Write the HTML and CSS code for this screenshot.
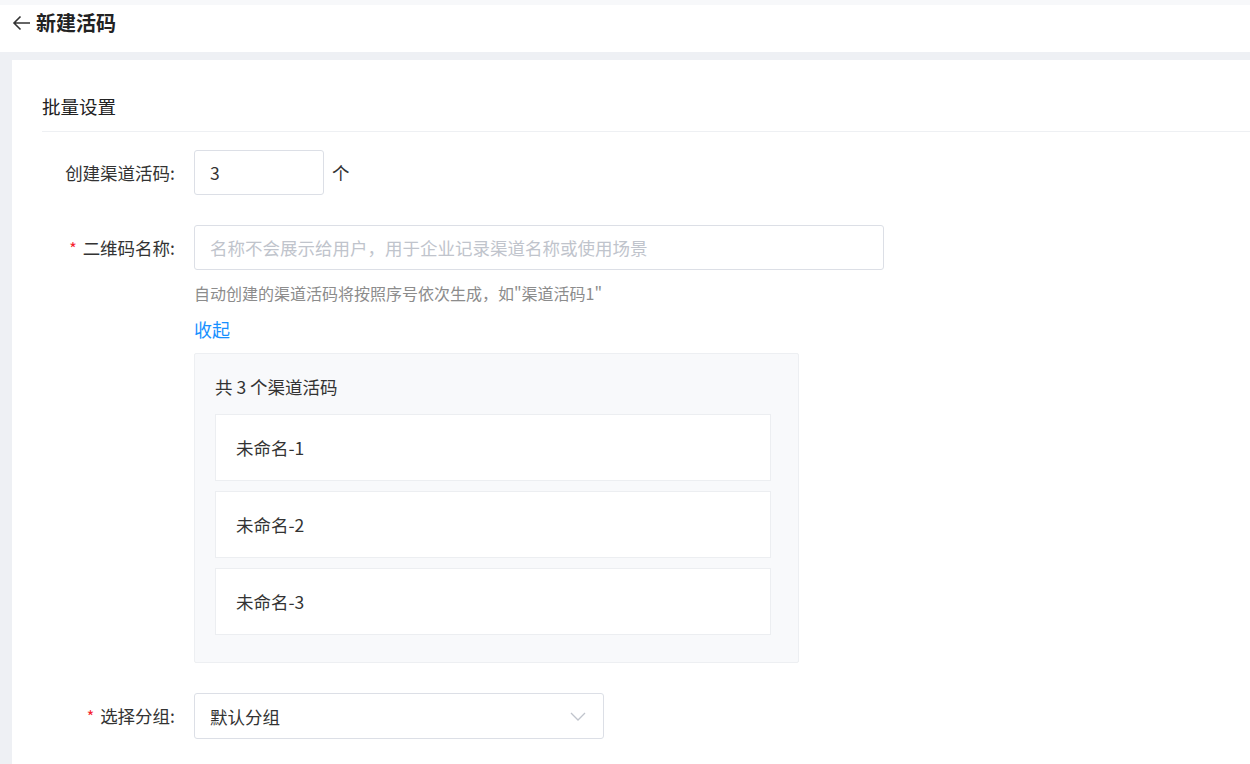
FILE: index.html
```html
<!DOCTYPE html>
<html lang="zh-CN">
<head>
    <meta charset="UTF-8">
    <meta name="viewport" content="width=device-width, initial-scale=1.0">
    <title>新建活码</title>
    <link rel="stylesheet" href="styles.css">
</head>
<body>
    <div class="header">
        <span class="back">
            <svg width="19" height="16" viewBox="0 0 19 16"><path d="M18 8H2M8.5 1.5L2 8l6.5 6.5" fill="none" stroke="#333" stroke-width="1.6"/></svg>
        </span>
        <h1>新建活码</h1>
    </div>

    <div class="main">
        <div class="panel">
            <div class="section-title">批量设置</div>

            <div class="form-row first">
                <label class="label">创建渠道活码:</label>
                <div class="field inline">
                    <input class="input count" type="text" value="3">
                    <span class="unit">个</span>
                </div>
            </div>

            <div class="form-row">
                <label class="label required">二维码名称:</label>
                <div class="field">
                    <input class="input name" type="text" placeholder="名称不会展示给用户，用于企业记录渠道名称或使用场景">
                    <div class="hint">自动创建的渠道活码将按照序号依次生成，如"渠道活码1"</div>
                    <a class="link" href="#">收起</a>
                    <div class="code-box">
                        <div class="code-title">共 3 个渠道活码</div>
                        <div class="code-item">未命名-1</div>
                        <div class="code-item">未命名-2</div>
                        <div class="code-item">未命名-3</div>
                    </div>
                </div>
            </div>

            <div class="form-row">
                <label class="label required">选择分组:</label>
                <div class="field">
                    <div class="select">
                        <span>默认分组</span>
                        <svg width="16" height="9" viewBox="0 0 16 9"><path d="M1 1l7 7 7-7" fill="none" stroke="#c0c4cc" stroke-width="1.3"/></svg>
                    </div>
                </div>
            </div>
        </div>
    </div>
</body>
</html>
```

FILE: styles.css
```css
body {
    margin: 0;
    background: #eef0f4;
    font-family: "Noto Sans CJK SC", "Noto Sans", sans-serif;
    color: #333;
}

.header {
    display: flex;
    align-items: flex-start;
    height: 43px;
    background: #fff;
    border-top: 5px solid #f7f8fa;
    padding: 4px 0 0 12px;
    box-sizing: content-box;
}

.back {
    display: flex;
    width: 19px;
    margin: 6px 5px 0 0;
}

.header h1 {
    margin: 0;
    font-size: 20px;
    font-weight: bold;
    color: #222;
    line-height: 28px;
}

.main {
    padding: 0 0 0 12px;
    border-top: 8px solid #eef0f4;
    height: 704px;
}

.panel {
    background: #fff;
    height: 100%;
    padding: 33px 0 0 30px;
    box-sizing: border-box;
}

.section-title {
    font-size: 18.5px;
    line-height: 26px;
    color: #222;
    padding-bottom: 12px;
    border-bottom: 1px solid #eef0f3;
}

.form-row {
    display: flex;
    align-items: flex-start;
    margin-top: 30px;
}

.form-row.first {
    margin-top: 18px;
}

.label {
    width: 133px;
    padding-right: 19px;
    text-align: right;
    font-size: 17.5px;
    line-height: 45px;
    color: #333;
    flex-shrink: 0;
    white-space: nowrap;
}

.required::before {
    content: "*";
    color: #f5222d;
    margin-right: 6px;
    font-size: 16px;
}

.field.inline {
    display: flex;
    align-items: center;
}

.input {
    height: 45px;
    box-sizing: border-box;
    border: 1px solid #dcdfe6;
    border-radius: 3px;
    padding: 0 15px;
    font-family: inherit;
    font-size: 17.5px;
    color: #333;
    outline: none;
}

.input::placeholder {
    color: #c0c4cc;
}

.input.count {
    width: 130px;
}

.input.name {
    width: 690px;
    display: block;
}

.unit {
    margin-left: 8px;
    font-size: 17.5px;
}

.hint {
    margin-top: 11px;
    font-size: 16px;
    line-height: 24px;
    color: #8c8c8c;
}

.link {
    display: block;
    margin-top: 12px;
    font-size: 18px;
    line-height: 24px;
    color: #1890ff;
    text-decoration: none;
}

.code-box {
    margin-top: 12px;
    width: 605px;
    box-sizing: border-box;
    background: #f8f9fb;
    border: 1px solid #edeff2;
    border-radius: 2px;
    padding: 21px 27px 27px 20px;
}

.code-title {
    font-size: 17.5px;
    line-height: 24px;
    color: #333;
    margin-bottom: 15px;
}

.code-item {
    height: 67px;
    box-sizing: border-box;
    background: #fff;
    border: 1px solid #eceef1;
    padding-left: 20px;
    display: flex;
    align-items: center;
    font-size: 17.5px;
    color: #333;
}

.code-item + .code-item {
    margin-top: 10px;
}

.select {
    width: 410px;
    height: 46px;
    box-sizing: border-box;
    border: 1px solid #dcdfe6;
    border-radius: 3px;
    padding: 0 17px 0 15px;
    display: flex;
    align-items: center;
    justify-content: space-between;
    font-size: 17.5px;
    color: #333;
}
```
